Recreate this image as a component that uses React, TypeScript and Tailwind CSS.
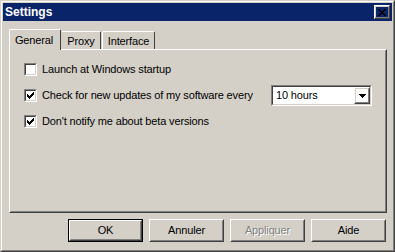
import React from "react";

const font = { fontFamily: '"Liberation Sans", Arial, sans-serif' };

function Raised({ children, className = "" }: { children?: React.ReactNode; className?: string }) {
  return (
    <div className={`border border-t-white border-l-white border-r-[#404040] border-b-[#404040] ${className}`}>
      <div className="flex h-full w-full items-center justify-center border border-t-[#d4d0c8] border-l-[#d4d0c8] border-r-[#808080] border-b-[#808080]">
        {children}
      </div>
    </div>
  );
}

function Checkbox({ checked }: { checked: boolean }) {
  return (
    <div className="h-[13px] w-[13px] shrink-0 border border-t-[#808080] border-l-[#808080] border-r-white border-b-white">
      <div className="flex h-full w-full items-center justify-center border border-t-[#404040] border-l-[#404040] border-r-[#d4d0c8] border-b-[#d4d0c8] bg-white">
        {checked && (
          <svg width="7" height="7" viewBox="0 0 7 7" shapeRendering="crispEdges">
            <path d="M0 2h1v3h-1zM1 3h1v3h-1zM2 4h1v3h-1zM3 3h1v3h-1zM4 2h1v3h-1zM5 1h1v3h-1zM6 0h1v3h-1z" fill="#000" />
          </svg>
        )}
      </div>
    </div>
  );
}

function Button({ label, isDefault, disabled }: { label: string; isDefault?: boolean; disabled?: boolean }) {
  const text = disabled ? (
    <span className="text-[#808080] [text-shadow:1px_1px_0_#fff]">{label}</span>
  ) : (
    <span className="text-black">{label}</span>
  );
  if (isDefault) {
    return (
      <div className="h-[23px] w-[75px] border border-black">
        <Raised className="h-full w-full">{text}</Raised>
      </div>
    );
  }
  return <Raised className="h-[23px] w-[75px]">{text}</Raised>;
}

export default function App() {
  return (
    <div
      className="h-[252px] w-[395px] border border-t-[#d4d0c8] border-l-[#d4d0c8] border-r-[#404040] border-b-[#404040] text-[11px] tracking-[-0.15px] text-black"
      style={font}
    >
      <div className="flex h-full w-full flex-col border border-t-white border-l-white border-r-[#808080] border-b-[#808080] bg-[#d4d0c8] p-px">
        {/* Title bar */}
        <div className="flex h-[18px] items-center justify-between bg-[#0a246a] pl-[2px] pr-[2px]">
          <span className="text-[12px] font-bold tracking-normal text-white">Settings</span>
          <Raised className="h-[14px] w-[16px]">
            <svg width="8" height="7" viewBox="0 0 8 7" shapeRendering="crispEdges">
              <path d="M0 0h2v1h-2zM6 0h2v1h-2zM1 1h2v1h-2zM5 1h2v1h-2zM2 2h4v1h-4zM3 3h2v1h-2zM2 4h4v1h-4zM1 5h2v1h-2zM5 5h2v1h-2zM0 6h2v1h-2zM6 6h2v1h-2z" fill="#000" />
            </svg>
          </Raised>
        </div>

        {/* Tabs */}
        <div className="ml-[6px] mt-[8px] flex h-[20px] items-end">
          <div className="relative z-10 -mb-px flex h-[21px] w-[52px] items-start justify-center rounded-t-[2px] border border-b-0 border-t-white border-l-white border-r-[#404040] bg-[#d4d0c8] pt-[2px]">
            <span className="-ml-[2px]">General</span>
          </div>
          <div className="flex h-[18px] w-[40px] items-start justify-center rounded-t-[2px] border border-b-0 border-t-white border-l-[#d4d0c8] border-r-[#404040] pt-[1px]">
            Proxy
          </div>
          <div className="ml-px flex h-[18px] w-[53px] items-start justify-center rounded-t-[2px] border border-b-0 border-t-white border-l-white border-r-[#404040] pt-[1px]">
            Interface
          </div>
        </div>

        {/* Panel */}
        <div className="ml-[6px] h-[164px] w-[378px] border border-t-white border-l-white border-r-[#404040] border-b-[#404040]">
          <div className="flex h-full w-full flex-col border border-t-[#d4d0c8] border-l-[#d4d0c8] border-r-[#808080] border-b-[#808080] pl-[13px] pt-[12px]">
            <div className="flex h-[13px] items-center gap-[5px]">
              <Checkbox checked={false} />
              <span>Launch at Windows startup</span>
            </div>
            <div className="mt-[13px] flex h-[13px] items-center">
              <Checkbox checked />
              <span className="ml-[5px] w-[229px]">Check for new updates of my software every</span>
              <div className="h-[21px] w-[101px] border border-t-[#808080] border-l-[#808080] border-r-white border-b-white">
                <div className="flex h-full w-full items-center border border-t-[#404040] border-l-[#404040] border-r-[#d4d0c8] border-b-[#d4d0c8] bg-white">
                  <span className="flex-1 pl-[3px]">10 hours</span>
                  <Raised className="h-[17px] w-[16px]">
                    <svg width="7" height="4" viewBox="0 0 7 4" shapeRendering="crispEdges">
                      <path d="M0 0h7v1h-7zM1 1h5v1h-5zM2 2h3v1h-3zM3 3h1v1h-1z" fill="#000" />
                    </svg>
                  </Raised>
                </div>
              </div>
            </div>
            <div className="mt-[13px] flex h-[13px] items-center gap-[5px]">
              <Checkbox checked />
              <span>Don't notify me about beta versions</span>
            </div>
          </div>
        </div>

        {/* Buttons */}
        <div className="ml-[65px] mt-[6px] flex gap-[6px]">
          <Button label="OK" isDefault />
          <Button label="Annuler" />
          <Button label="Appliquer" disabled />
          <Button label="Aide" />
        </div>
      </div>
    </div>
  );
}
